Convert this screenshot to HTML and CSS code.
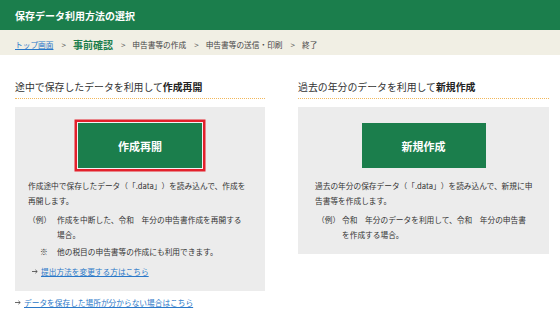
FILE: index.html
```html
<!DOCTYPE html>
<html lang="ja">
<head>
<meta charset="utf-8">
<title>保存データ利用方法の選択</title>
<link rel="stylesheet" href="styles.css">
</head>
<body>
<header class="title-bar">保存データ利用方法の選択</header>
<nav class="crumbs">
  <a class="crumb-link" href="#">トップ画面</a>
  <span class="sep">&gt;</span>
  <span class="crumb-current">事前確認</span>
  <span class="sep">&gt;</span>
  <span class="crumb">申告書等の作成</span>
  <span class="sep">&gt;</span>
  <span class="crumb">申告書等の送信・印刷</span>
  <span class="sep">&gt;</span>
  <span class="crumb">終了</span>
</nav>
<main class="options">
  <section class="option">
    <h2 class="option-title">途中で保存したデータを利用して<strong>作成再開</strong></h2>
    <div class="option-box">
      <div class="btn-row"><button class="btn btn-focus">作成再開</button></div>
      <div class="box-body">
        <p class="desc">作成途中で保存したデータ（「.data」）を読み込んで、作成を再開します。</p>
        <div class="note"><span class="note-label">（例）</span><span class="note-text">作成を中断した、令和　年分の申告書作成を再開する場合。</span></div>
        <div class="note note-mark"><span class="note-label mark">※</span><span class="note-text">他の税目の申告書等の作成にも利用できます。</span></div>
        <div class="link-row inner-link"><svg class="arrow" width="6" height="5" viewBox="0 0 6 5"><path d="M0 2.5H5.2M3.4 0.8L5.2 2.5L3.4 4.2" fill="none" stroke="#444" stroke-width="0.8"/></svg><a href="#">提出方法を変更する方はこちら</a></div>
      </div>
    </div>
  </section>
  <section class="option option-right">
    <h2 class="option-title">過去の年分のデータを利用して<strong>新規作成</strong></h2>
    <div class="option-box">
      <div class="btn-row"><button class="btn">新規作成</button></div>
      <div class="box-body">
        <p class="desc">過去の年分の保存データ（「.data」）を読み込んで、新規に申告書等を作成します。</p>
        <div class="note"><span class="note-label">（例）</span><span class="note-text">令和　年分のデータを利用して、令和　年分の申告書を作成する場合。</span></div>
      </div>
    </div>
  </section>
</main>
<div class="link-row outer-link"><svg class="arrow" width="6" height="5" viewBox="0 0 6 5"><path d="M0 2.5H5.2M3.4 0.8L5.2 2.5L3.4 4.2" fill="none" stroke="#444" stroke-width="0.8"/></svg><a href="#">データを保存した場所が分からない場合はこちら</a></div>
</body>
</html>
```
FILE: styles.css
```css
* { box-sizing: border-box; }
html, body { margin: 0; padding: 0; background: #fff; }
body {
  font-family: "Noto Sans CJK JP", "Noto Sans", sans-serif;
  color: #333;
  width: 560px;
  text-spacing-trim: space-all;
}
.title-bar {
  height: 30px;
  background: #1b7e4c;
  color: #fff;
  font-weight: bold;
  font-size: 10px;
  display: flex;
  align-items: center;
  padding-left: 15px;
}
.crumbs {
  height: 25px;
  background: #f1efe4;
  display: flex;
  align-items: center;
  padding: 3px 0 0 15px;
  font-size: 7.7px;
  color: #444;
}
.crumb-link { color: #2a78c8; text-decoration: underline; }
.sep { margin: 0 7px 0 8px; color: #555; font-size: 8px; }
.crumb-current { color: #1b7e4c; font-weight: bold; font-size: 10px; }
.options {
  display: grid;
  grid-template-columns: 250px 251px;
  column-gap: 33px;
  padding: 25px 0 0 15px;
}
.option-title {
  margin: 0 0 8px;
  font-size: 9.9px;
  font-weight: normal;
  line-height: 14px;
  padding-bottom: 4px;
  border-bottom: 1px dotted #f2b75a;
  color: #333;
}
.option-title strong { font-weight: bold; color: #222; }
.option-box {
  background: #ececec;
  padding: 16px 0 12px;
  font-size: 7.7px;
  line-height: 15px;
}
.box-body { padding: 0 17px 0 13px; }
.option-right .box-body { padding: 0 16px 0 17px; }
.btn-row { display: flex; justify-content: center; }
.btn {
  width: 124px;
  height: 45px;
  border: 0;
  background: #1b7e4c;
  color: #fff;
  font-family: inherit;
  font-weight: bold;
  font-size: 11px;
  padding: 0;
}
.btn-focus { box-shadow: 0 0 0 1px #f2f2f2, 0 0 0 3.5px #e3202b; }
.desc { margin: 10px 0 0; }
.note { display: flex; margin-top: 4px; }
.note-label { flex: 0 0 29px; }
.option-right .note-label { flex-basis: 27px; padding-left: 2px; }
.note-mark { margin-top: 2px; }
.note-label.mark { padding-left: 12px; }
.note-text { flex: 1; }
.link-row { display: flex; align-items: center; }
.link-row a { color: #2a78c8; text-decoration: underline; }
.arrow { margin-right: 3px; flex: none; }
.inner-link { margin-top: 5px; padding-left: 4px; }
.outer-link {
  margin-top: 4px;
  padding-left: 15px;
  font-size: 7.7px;
  line-height: 15px;
}
```
